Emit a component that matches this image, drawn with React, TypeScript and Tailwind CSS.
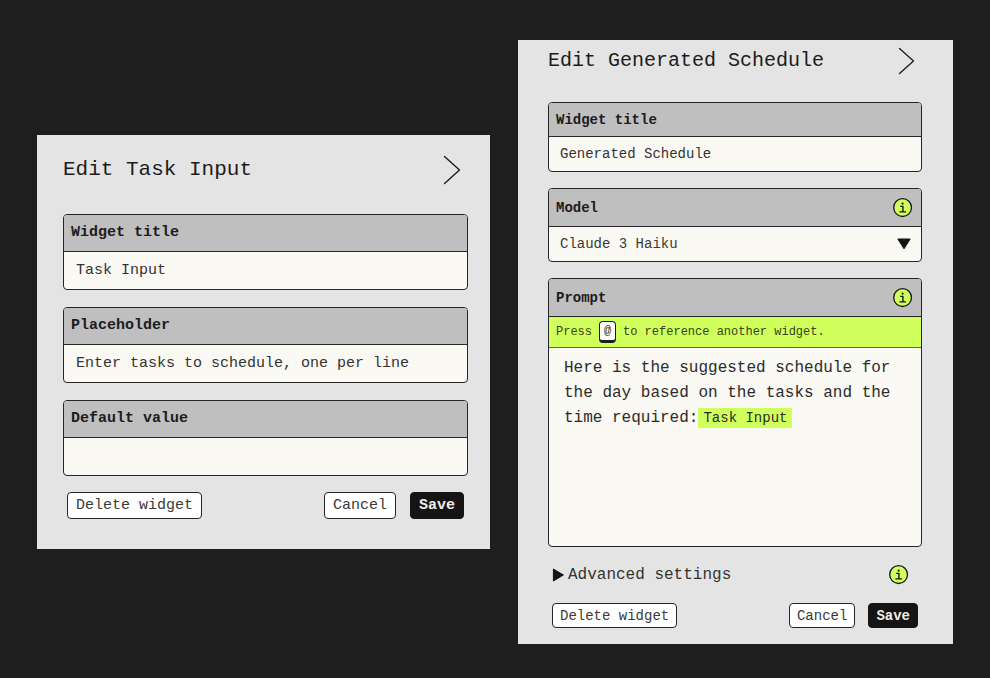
import { useId } from 'react';
import type { ReactNode } from 'react';

type Size = 'lg' | 'md';

function Chevron({ size }: { size: Size }) {
  return (
    <button type="button" aria-label="Close panel" className="shrink-0 text-[#1c1c1c]">
      <svg
        viewBox="0 0 18 30"
        className={size === 'lg' ? 'h-[30px] w-[18px]' : 'h-7 w-[17px]'}
        fill="none"
        stroke="currentColor"
        strokeWidth="1.4"
        strokeLinecap="round"
        strokeLinejoin="round"
      >
        <path d="M1.5 1.5 16.5 15 1.5 28.5" />
      </svg>
    </button>
  );
}

function InfoButton({ about }: { about: string }) {
  return (
    <button type="button" aria-label={`About ${about}`} className="shrink-0 text-[#161616]">
      <svg viewBox="0 0 20 20" className="size-5" fill="none" stroke="currentColor">
        <circle cx="9.6" cy="9.6" r="8.9" fill="#d1ff5c" strokeWidth="1.3" />
        <circle cx="9.6" cy="5.6" r="1.1" fill="currentColor" stroke="none" />
        <path d="M7.2 8.4h2.7v5.4M6.4 13.9h6.6" strokeWidth="1.4" />
      </svg>
    </button>
  );
}

function Field({
  label,
  htmlFor,
  labelId,
  size,
  info,
  children,
}: {
  label: string;
  htmlFor?: string;
  labelId?: string;
  size: Size;
  info?: boolean;
  children: ReactNode;
}) {
  const height = size === 'lg' ? 'h-[37px] text-[15px]' : info ? 'h-[38px] text-sm' : 'h-[34px] text-sm';
  return (
    <div className="overflow-hidden rounded border border-[#262626] bg-[#faf9f3]">
      <div
        className={`flex items-center justify-between border-b border-[#262626] bg-[#bfbfbf] pr-2 pl-[7px] font-bold text-[#1c1c1c] ${height}`}
      >
        <label id={labelId} htmlFor={htmlFor}>
          {label}
        </label>
        {info && <InfoButton about={label} />}
      </div>
      {children}
    </div>
  );
}

function TextField({ label, value, size }: { label: string; value: string; size: Size }) {
  const id = useId();
  return (
    <Field label={label} htmlFor={id} size={size}>
      <input
        id={id}
        type="text"
        defaultValue={value}
        className={`block w-full bg-transparent text-[#333] outline-none ${
          size === 'lg' ? 'h-[37px] px-3 text-[15px]' : 'h-[34px] px-[11px] text-sm'
        }`}
      />
    </Field>
  );
}

function Actions({ size }: { size: Size }) {
  const box =
    size === 'lg' ? 'h-[27px] px-2 text-[15px] leading-5' : 'h-[25px] px-[7px] text-sm leading-5';
  const light = `rounded border border-[#262626] bg-white text-[#3a3a3a] ${box}`;
  return (
    <div className="flex items-center justify-between px-1">
      <button type="button" className={light}>
        Delete widget
      </button>
      <div className={size === 'lg' ? 'flex gap-3.5' : 'flex gap-[13px]'}>
        <button type="button" className={light}>
          Cancel
        </button>
        <button
          type="button"
          className={`rounded border border-[#141414] bg-[#141414] font-bold text-[#efeee6] ${box}`}
        >
          Save
        </button>
      </div>
    </div>
  );
}

function TaskInputPanel() {
  return (
    <section className="bg-[#e4e4e4] pt-5 pr-[22px] pb-[30px] pl-[26px]">
      <header className="flex h-[30px] items-center justify-between pr-[7px]">
        <h2 className="text-[21px] text-[#1c1c1c]">Edit Task Input</h2>
        <Chevron size="lg" />
      </header>
      <div className="mt-[29px] mb-4 flex flex-col gap-[17px]">
        <TextField size="lg" label="Widget title" value="Task Input" />
        <TextField size="lg" label="Placeholder" value="Enter tasks to schedule, one per line" />
        <TextField size="lg" label="Default value" value="" />
      </div>
      <Actions size="lg" />
    </section>
  );
}

function GeneratedSchedulePanel() {
  const modelId = useId();
  const promptId = useId();
  return (
    <section className="bg-[#e4e4e4] pt-[7px] pr-[31px] pb-4 pl-[30px]">
      <header className="flex h-7 items-center justify-between pr-[7px]">
        <h2 className="text-xl text-[#1c1c1c]">Edit Generated Schedule</h2>
        <Chevron size="md" />
      </header>
      <div className="mt-[27px] flex flex-col gap-4">
        <TextField size="md" label="Widget title" value="Generated Schedule" />
        <Field size="md" label="Model" htmlFor={modelId} info>
          <div className="relative">
            <select
              id={modelId}
              defaultValue="haiku"
              className="block h-[34px] w-full appearance-none bg-transparent px-[11px] text-sm text-[#3a3a3a] outline-none"
            >
              <option value="haiku">Claude 3 Haiku</option>
            </select>
            <svg
              viewBox="0 0 14 12"
              className="pointer-events-none absolute top-[11px] right-[10px] h-3 w-3.5 text-[#141414]"
              fill="currentColor"
              stroke="currentColor"
              strokeLinejoin="round"
            >
              <path d="M.8 1h12.4L7 10.8Z" />
            </svg>
          </div>
        </Field>
        <Field size="md" label="Prompt" labelId={promptId} info>
          <p className="flex h-[31px] items-center border-b border-[#5c6b31] bg-[#d1ff5c] px-[7px] text-xs text-[#36421a]">
            Press
            <kbd className="mx-[7px] flex h-[22px] w-[17px] items-center justify-center rounded border border-b-3 border-[#1f1f1f] bg-white font-[inherit]">
              @
            </kbd>
            to reference another widget.
          </p>
          <div
            role="textbox"
            aria-multiline="true"
            aria-labelledby={promptId}
            contentEditable
            suppressContentEditableWarning
            spellCheck={false}
            className="min-h-[198px] px-[15px] py-2 text-base leading-[25px] text-[#2b2b2b] outline-none"
          >
            <span>Here is the suggested schedule for the day based on the tasks and the time required:</span>
            <span className="bg-[#d1ff5c] px-[5px] py-0.5 text-sm leading-5" contentEditable={false}>
              Task Input
            </span>
          </div>
        </Field>
      </div>
      <div className="mt-[18px] mb-[18px] flex items-center justify-between pr-[13px] pl-1">
        <button type="button" aria-expanded="false" className="flex h-5 items-center gap-1 text-base leading-5 text-[#333]">
          <svg
            viewBox="0 0 12 14"
            className="h-3.5 w-3 text-[#141414]"
            fill="currentColor"
            stroke="currentColor"
            strokeLinejoin="round"
          >
            <path d="M1.4 1v12L11.4 7Z" />
          </svg>
          Advanced settings
        </button>
        <InfoButton about="Advanced settings" />
      </div>
      <Actions size="md" />
    </section>
  );
}

export default function App() {
  return (
    <main className="grid min-h-screen grid-cols-[453fr_435fr] items-center gap-7 bg-[#1e1e1e] px-[37px] pt-10 pb-[34px] font-['Liberation_Mono',monospace]">
      <TaskInputPanel />
      <GeneratedSchedulePanel />
    </main>
  );
}
